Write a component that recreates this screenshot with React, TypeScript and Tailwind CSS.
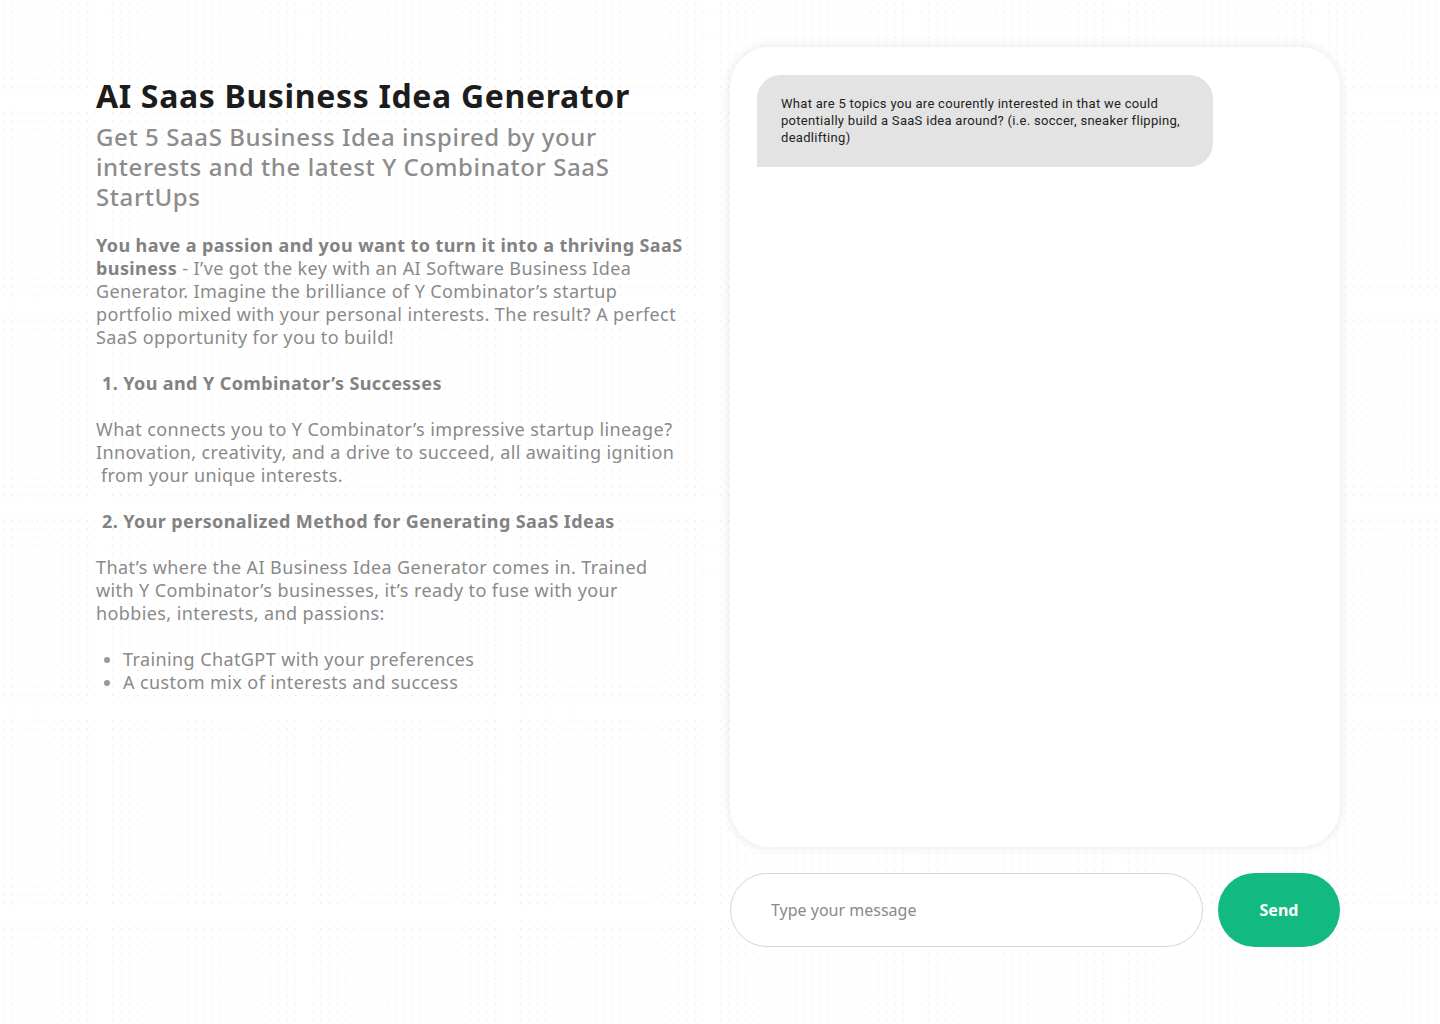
import React, { useState } from 'react';

const dots =
  'bg-[radial-gradient(#dcdcdc_0.8px,transparent_0.9px)] bg-[size:8.33px_8.33px]';

export default function App() {
  const [message, setMessage] = useState('');

  return (
    <div className={`min-h-[1024px] w-full bg-white ${dots} font-['Noto_Sans',sans-serif]`}>
      <div className="flex gap-10 pl-24 pr-[100px] pt-[47px]">
        {/* left: intro copy */}
        <div className="w-[594px] shrink-0 pt-[29px] text-[18px] leading-[23px] tracking-[0.4px] text-[#8a8a8a]">
          <h1 className="whitespace-nowrap text-[32px] font-bold leading-[40px] tracking-[0.65px] text-[#1c1c1c]">
            AI Saas Business Idea Generator
          </h1>
          <h2 className="mt-[6px] whitespace-nowrap text-[24px] font-medium leading-[30px] tracking-[0.6px] text-[#8c8c8c]">
            Get 5 SaaS Business Idea inspired by your
            <br />
            interests and the latest Y Combinator SaaS
            <br />
            StartUps
          </h2>

          <p className="mt-[22px] whitespace-nowrap">
            <strong className="font-bold tracking-[0.4px] text-[#828282]">
              You have a passion and you want to turn it into a thriving SaaS
              <br />
              business
            </strong>{' '}
            - I’ve got the key with an AI Software Business Idea
            <br />
            Generator. Imagine the brilliance of Y Combinator’s startup
            <br />
            portfolio mixed with your personal interests. The result? A perfect
            <br />
            SaaS opportunity for you to build!
          </p>

          <h3 className="mt-[23px] pl-[6px] font-bold tracking-[0.4px] text-[#828282]">
            1. You and Y Combinator’s Successes
          </h3>
          <p className="mt-[23px] whitespace-nowrap">
            What connects you to Y Combinator’s impressive startup lineage?
            <br />
            Innovation, creativity, and a drive to succeed, all awaiting ignition
            <br />
            <span className="pl-[5px]">from your unique interests.</span>
          </p>

          <h3 className="mt-[23px] pl-[6px] font-bold tracking-[0.4px] text-[#828282]">
            2. Your personalized Method for Generating SaaS Ideas
          </h3>
          <p className="mt-[23px] whitespace-nowrap">
            That’s where the AI Business Idea Generator comes in. Trained
            <br />
            with Y Combinator’s businesses, it’s ready to fuse with your
            <br />
            hobbies, interests, and passions:
          </p>

          <ul className="mt-[23px] list-disc pl-[27px] marker:text-[#9a9a9a]">
            <li>Training ChatGPT with your preferences</li>
            <li>A custom mix of interests and success</li>
          </ul>
        </div>

        {/* right: chat */}
        <div className="w-[610px] shrink-0">
          <div className="h-[800px] rounded-[40px] bg-white px-[27px] pt-[28px] shadow-[0_0_10px_2px_rgba(0,0,0,0.07)]">
            <div className="w-[456px] rounded-[24px] rounded-bl-none bg-[#e3e3e3] px-6 pt-[20px] pb-[21px] font-['Roboto',sans-serif] text-[13px] leading-[17px] tracking-[0.3px] text-[#222]">
              What are 5 topics you are courently interested in that we could potentially build a
              SaaS idea around? (i.e. soccer, sneaker flipping, deadlifting)
            </div>
          </div>

          <div className="mt-[26px] flex gap-[15px]">
            <input
              value={message}
              onChange={(e) => setMessage(e.target.value)}
              placeholder="Type your message"
              className="h-[74px] flex-1 rounded-full border border-[#d6d6d6] bg-white px-10 text-[16px] text-[#333] outline-none placeholder:text-[#8a8a8a]"
            />
            <button className="h-[74px] w-[122px] rounded-full bg-[#12b981] text-[16px] font-bold text-white">
              Send
            </button>
          </div>
        </div>
      </div>
    </div>
  );
}
